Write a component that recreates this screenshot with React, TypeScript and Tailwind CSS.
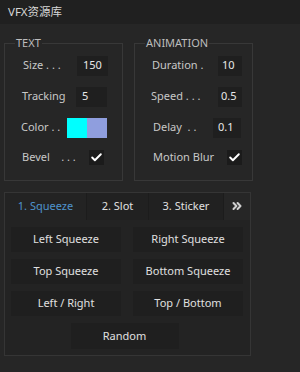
import { Check, ChevronsRight } from 'lucide-react';

const font = { fontFamily: '"Noto Sans", "Noto Sans CJK SC", sans-serif' };

function Field({ label, value, indent = 'pl-[18px]' }: { label: string; value: string; indent?: string }) {
  return (
    <div className={`flex h-[31px] items-center ${indent}`}>
      <span className="w-[54px] text-[11px] text-[#c8c8c8]">{label}</span>
      <div className="flex h-[20px] w-[31px] items-center bg-[#1f1f1f] pl-[6px] text-[11px] text-[#e8e8e8]">{value}</div>
    </div>
  );
}

function Check2() {
  return (
    <div className="flex h-[15px] w-[15px] items-center justify-center bg-[#1b1b1b]">
      <Check className="h-[13px] w-[13px] text-white" strokeWidth={3.5} />
    </div>
  );
}

const buttons = [
  ['Left Squeeze', 'Right Squeeze'],
  ['Top Squeeze', 'Bottom Squeeze'],
  ['Left / Right', 'Top / Bottom'],
];

export default function App() {
  return (
    <div className="h-[372px] w-[300px] bg-[#262626] text-[11px]" style={font}>
      <div className="flex h-[24px] items-center bg-[#202020] pl-[8px] text-[11.5px] text-[#d6d6d6]">VFX资源库</div>

      <div className="flex gap-[11px] px-[4px] pt-[12px]">
        <fieldset className="h-[145px] w-[119px] border border-[#383838]">
          <legend className="ml-[10px] px-[1px] text-[11px] leading-[14px] text-[#bdbdbd]">TEXT</legend>
          <div>
            <Field label="Size . . ." value="150" />
            <Field label="Tracking" value="5" indent="pl-[17px]" />
            <div className="flex h-[31px] items-center pl-[16px]">
              <span className="w-[46px] text-[11px] text-[#c8c8c8]">Color . .</span>
              <div className="h-[20px] w-[20px] bg-[#00ffff]" />
              <div className="h-[20px] w-[20px] bg-[#8f9ede]" />
            </div>
            <div className="flex h-[28px] items-center pl-[17px]">
              <span className="w-[67px] text-[11px] text-[#c8c8c8]">Bevel&nbsp;&nbsp;&nbsp;&nbsp;. . .</span>
              <Check2 />
            </div>
          </div>
        </fieldset>

        <fieldset className="h-[145px] w-[119px] border border-[#383838]">
          <legend className="ml-[10px] px-[1px] text-[11px] leading-[14px] text-[#bdbdbd]">ANIMATION</legend>
          <div>
            <div className="flex h-[31px] items-center pl-[17px]">
              <span className="w-[66px] text-[11px] text-[#c8c8c8]">Duration .</span>
              <div className="flex h-[20px] w-[24px] items-center bg-[#1f1f1f] pl-[4px] text-[11px] text-[#e8e8e8]">10</div>
            </div>
            <div className="flex h-[31px] items-center pl-[16px]">
              <span className="w-[67px] text-[11px] text-[#c8c8c8]">Speed . . .</span>
              <div className="flex h-[20px] w-[24px] items-center bg-[#1f1f1f] pl-[3px] text-[11px] text-[#e8e8e8]">0.5</div>
            </div>
            <div className="flex h-[31px] items-center pl-[18px]">
              <span className="w-[60px] text-[11px] text-[#c8c8c8]">Delay&nbsp;&nbsp;. .</span>
              <div className="flex h-[20px] w-[28px] items-center bg-[#1f1f1f] pl-[5px] text-[11px] text-[#e8e8e8]">0.1</div>
            </div>
            <div className="flex h-[28px] items-center pl-[18px]">
              <span className="w-[74px] text-[11px] text-[#c8c8c8]">Motion Blur</span>
              <Check2 />
            </div>
          </div>
        </fieldset>
      </div>

      <div className="ml-[4px] mt-[11px] h-[164px] w-[247px] border border-[#353535] bg-[#232323]">
        <div className="flex h-[27px] bg-[#262626]">
          <div className="flex w-[81px] items-center justify-center bg-[#232323] text-[11px] text-[#4f93cc]">1. Squeeze</div>
          <div className="flex w-[62px] items-center justify-center border-l border-[#1c1c1c] bg-[#212121] text-[11px] text-[#e0e0e0]">2. Slot</div>
          <div className="flex w-[76px] items-center justify-center border-x border-[#1c1c1c] bg-[#212121] text-[11px] text-[#e0e0e0]">3. Sticker</div>
          <div className="flex flex-1 items-center justify-center pb-[2px] text-[#cfcfcf]">
            <ChevronsRight className="h-[14px] w-[14px]" strokeWidth={3.5} />
          </div>
        </div>
        <div className="flex flex-col gap-[7px] px-[6px] pt-[7px]">
          {buttons.map((row, i) => (
            <div key={i} className="flex gap-[12px]">
              {row.map((b) => (
                <div key={b} className="flex h-[25px] w-[110px] items-center justify-center bg-[#1f1f1f] text-[11px] text-[#e0e0e0]">
                  {b}
                </div>
              ))}
            </div>
          ))}
          <div className="flex justify-center">
            <div className="ml-[-6px] flex h-[26px] w-[108px] items-center justify-center bg-[#1f1f1f] text-[11px] text-[#e0e0e0]">Random</div>
          </div>
        </div>
      </div>
    </div>
  );
}
